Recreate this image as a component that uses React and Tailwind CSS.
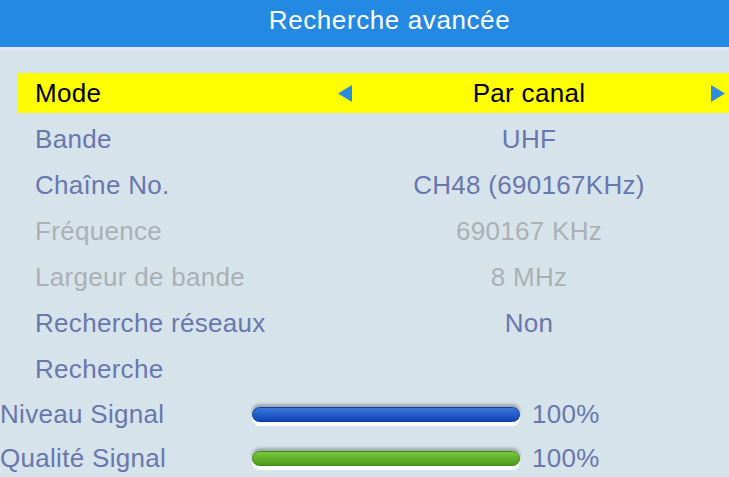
import React from "react";

const rows = [
	{ label: "Mode", value: "Par canal", selected: true },
	{ label: "Bande", value: "UHF" },
	{ label: "Chaîne No.", value: "CH48 (690167KHz)" },
	{ label: "Fréquence", value: "690167 KHz", disabled: true },
	{ label: "Largeur de bande", value: "8 MHz", disabled: true },
	{ label: "Recherche réseaux", value: "Non" },
	{ label: "Recherche", value: "" },
];

function Arrow({ dir, show }) {
	return (
		<div className="w-[15px] flex items-center justify-center">
			{show && (
				<svg width="14" height="17" viewBox="0 0 14 17">
					{dir === "left" ? (
						<polygon points="14,0 14,17 0,8.5" fill="#2a8ee0" />
					) : (
						<polygon points="0,0 0,17 14,8.5" fill="#2a8ee0" />
					)}
				</svg>
			)}
		</div>
	);
}

function SettingRow({ label, value, selected, disabled }) {
	const color = selected
		? "text-black"
		: disabled
		? "text-[#aab0b5]"
		: "text-[#6877ae]";
	return (
		<div className="h-[46px] flex items-center">
			<div
				className={`ml-[17px] h-[40px] flex-1 flex items-center pr-[4px] ${
					selected ? "bg-[#ffff00]" : ""
				} ${color}`}
			>
				<div className="pl-[18px] w-[320px]">{label}</div>
				<Arrow dir="left" show={selected} />
				<div className="flex-1 text-center pr-[4px]">{value}</div>
				<Arrow dir="right" show={selected} />
			</div>
		</div>
	);
}

function SignalRow({ label, from, to, edge }) {
	return (
		<div className="h-[44px] flex items-center text-[#6877ae]">
			<div className="w-[252px] whitespace-nowrap">{label}</div>
			<div className="w-[268px] h-[15px] rounded-full shadow-[0_-3px_3px_rgba(80,80,80,0.4),0_4px_1px_#ffffff]">
				<div
					className="w-full h-full rounded-full border"
					style={{
						background: `linear-gradient(to bottom, ${from}, ${to})`,
						borderColor: edge,
					}}
				/>
			</div>
			<div className="ml-[12px]">100%</div>
		</div>
	);
}

export default function App() {
	return (
		<div
			className="w-[729px] h-[477px] overflow-hidden bg-[#d7e3ea] text-[26px] tracking-[0.3px]"
			style={{ fontFamily: '"Liberation Sans", Arial, sans-serif' }}
		>
			<div className="h-[47px] bg-[#2389e2] flex items-center justify-center pl-[50px] pb-[8px] text-white text-[26px] tracking-[0.6px] leading-none">
				Recherche avancée
			</div>
			<div className="h-[3px] bg-[#e0eaf0]" />
			<div className="pt-[20px] leading-none">
				{rows.map((r) => (
					<SettingRow key={r.label} {...r} />
				))}
				<SignalRow
					label="Niveau Signal"
					from="#3b78dc"
					to="#0f44b4"
					edge="#0a3a9e"
				/>
				<SignalRow
					label="Qualité Signal"
					from="#78c83a"
					to="#4b9a1c"
					edge="#3e8a14"
				/>
			</div>
		</div>
	);
}
